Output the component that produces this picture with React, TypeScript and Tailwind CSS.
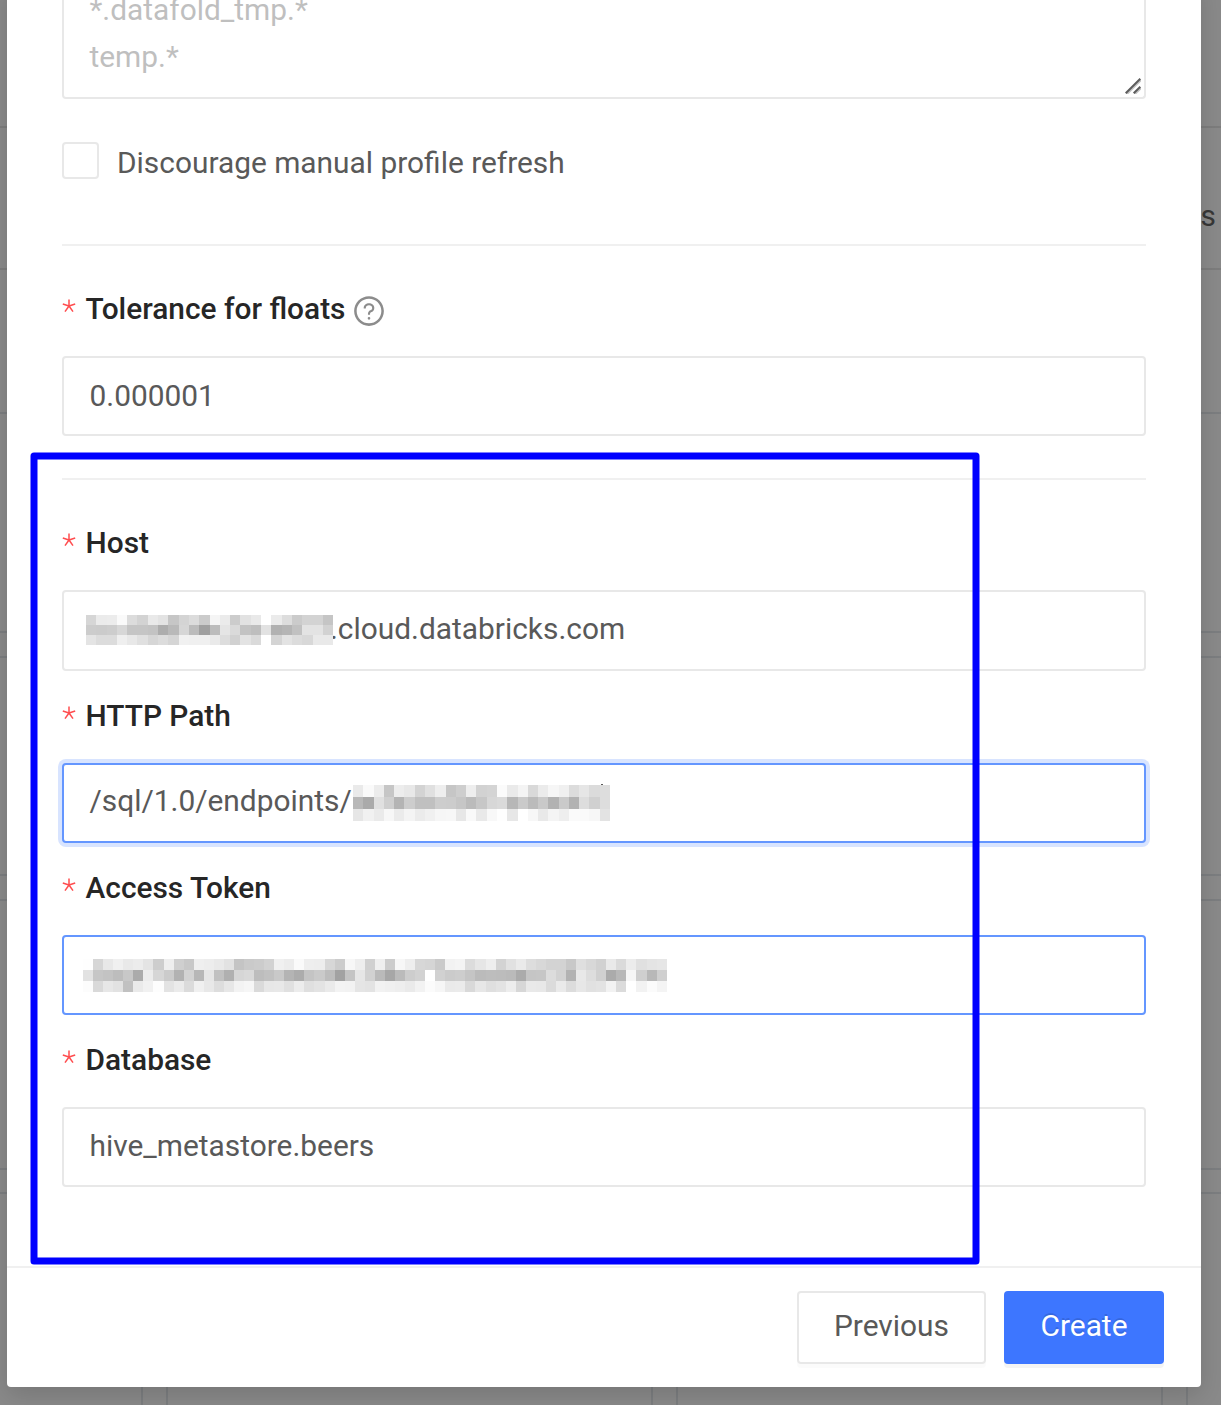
import type { ReactNode } from "react";
import { AiOutlineQuestionCircle } from "react-icons/ai";

const HOST_MASK = [
  "d6ebecfadcd3e9e3c6d4dccbf5ebcce2e9ffebddcbd3d3c5",
  "cccbcdd7c5c5c3adb9d6bca0bce5dac3bee2b1b5c1e3e3d2",
  "e4dcdcefe8e0d6dcd5f1f0f0eaddd1e3daffd4e3dcd8e9e9",
];
const PATH_MASK = [
  "eafaecc6ede8d3e0eec6ceeed2d4fbeaf4d9ebf6f0dce6dbdd",
  "b8aae0cfb4cdc0c0cdccc6bbc7d7dab7cabbc9b2cab2ddd0dd",
  "e6f1eaf7ebf4ebf0f6f7e7f9e9f8fee7fff7e9f4eefafaf7e3",
];
const TOKEN_MASK = [
  "fed6e8f0e9ece4cdeecfc8efede9e2c4caccd2f0ecfaeeedd7ccf7eed0efccf7eed7d5caf2f4dce6eed3e1eaddd8d3d3c8dfd8d1e9daece0e4e6",
  "e2c6c3bdc8abecd6cbb2d3b7e6c1b0d6d9bdc1c9b4acc4cabda2c4e6d1baa7bbcdd2ffd1cbcdc5bbbdbcbaabc5c6dcd2b2e8ddd0abb8f6cfb8cf",
  "fcd9e7e2c1eaf1fde3ebdbf0e8dde7f3f6dae7e8e0ecdfe3eaf3f2e5e3f2f0eeeaf2fbf6eaebd9e7dfe3edd7e9e8dbeadce7e1e3f2dbfff2fbf4",
];

function Mosaic({ rows, className }: { rows: string[]; className: string }) {
  return (
    <span aria-hidden className={`relative z-10 flex shrink-0 flex-col ${className}`}>
      {rows.map((row, r) => (
        <span key={r} className="flex flex-1">
          {(row.match(/../g) ?? []).map((v, i) => (
            <span key={i} className="flex-1" style={{ backgroundColor: `#${v}${v}${v}` }} />
          ))}
        </span>
      ))}
    </span>
  );
}

function Label({ children, help }: { children: ReactNode; help?: boolean }) {
  return (
    <div className="flex h-[47px] items-center pb-0.5">
      <span className="w-[23.5px]">
        <svg viewBox="0 0 14 14" className="-mt-1.5 h-3.5 w-3.5 stroke-[#ff4d4f]" fill="none" strokeWidth="1.5">
          <path d="M7 0.5V7M7 7L0.8 5M7 7L13.2 5M7 7L3 12.6M7 7L11 12.6" />
        </svg>
      </span>
      <span className="font-medium text-[#262626]">{children}</span>
      {help && <AiOutlineQuestionCircle className="mt-1 ml-[7px] text-[34px] text-[#8c8c8c]" />}
    </div>
  );
}

function Field({ className, children }: { className: string; children: ReactNode }) {
  return <div className={`flex items-center rounded border-2 bg-white ${className}`}>{children}</div>;
}

function BackdropRow({ className }: { className: string }) {
  return (
    <div className={`-ml-[344px] flex w-[2020px] gap-[23px] ${className}`}>
      {[0, 1, 2, 3].map((i) => (
        <div key={i} className="w-[487px] shrink-0 border-2 border-[#7c7e80]" />
      ))}
    </div>
  );
}

export default function App() {
  return (
    <div className="relative h-[1405px] w-[1221px] overflow-hidden bg-[#8a8a8a] font-[Roboto,sans-serif] text-[29.87px] leading-[47px] text-[#595959]">
      <div className="flex flex-col">
        <div className="h-32 border-b-2 border-[#7d7d7d]" />
        <div className="flex h-[142px] items-center justify-end border-b-2 border-[#7d7d7d] pr-[5px] pt-[35px] text-[#373737]">s</div>
        <div className="h-[142px]" />
        <BackdropRow className="h-[221px]" />
        <BackdropRow className="mt-[23px] h-[220px]" />
        <BackdropRow className="mt-[23px] h-[271px]" />
        <BackdropRow className="mt-[22px] h-[271px]" />
      </div>

      <div className="absolute top-[-20px] left-[7px] flex h-[1407px] w-[1194px] flex-col rounded-[4px] bg-white shadow-[0_8px_26px_rgba(0,0,0,0.15)]">
        <div className="flex flex-1 flex-col px-[55px]">
          <div className="flex h-[119px] items-end justify-between rounded-b border-2 border-t-0 border-[#e8e8e8]">
            <div className="pb-[17px] pl-[25.5px] text-[#bfbfbf]">
              <div>*.datafold_tmp.*</div>
              <div>temp.*</div>
            </div>
            <svg viewBox="0 0 16 16" className="mr-[3px] mb-[3px] h-4 w-4" fill="none">
              <path d="M2 16L16 2M10 16L16 10" stroke="#c4c4c4" strokeWidth="2" />
              <path d="M0.7 15.3L15.3 0.7M8.7 15.3L15.3 8.7" stroke="#5c5c5c" strokeWidth="2" />
            </svg>
          </div>

          <div className="mt-[43px] flex h-[37px] items-center">
            <span className="h-[37px] w-[37px] rounded border-2 border-[#e8e8e8]" />
            <span className="mt-1 ml-[18px]">Discourage manual profile refresh</span>
          </div>

          <div className="mt-[65px] h-0.5 bg-[#f0f0f0]" />

          <div className="mt-10">
            <Label help>Tolerance for floats</Label>
          </div>
          <Field className="mt-[23px] h-20 border-[#e8e8e8] pb-0.5 pl-[25.5px]">0.000001</Field>

          <div className="mt-[42px] h-0.5 bg-[#f0f0f0]" />

          <div className="mt-10">
            <Label>Host</Label>
          </div>
          <Field className="mt-[23px] h-[81px] border-[#e8e8e8] pl-[22px]">
            <Mosaic rows={HOST_MASK} className="mb-px h-[30px] w-[247px]" />
            <span className="-ml-[3px] pb-[5px]">.cloud.databricks.com</span>
          </Field>

          <div className="mt-[22px]">
            <Label>HTTP Path</Label>
          </div>
          <Field className="mt-[23px] h-20 border-[#6496ff] pl-[25.5px] shadow-[0_0_0_4px_#d8e4ff]">
            <span className="w-[263.5px] pb-1.5">/sql/1.0/endpoints/</span>
            <Mosaic rows={PATH_MASK} className="h-9 w-[257px]" />
            <span className="mb-[37px] -ml-[9px] h-px w-0.5 bg-[#595959]" />
          </Field>

          <div className="mt-[22px]">
            <Label>Access Token</Label>
          </div>
          <Field className="mt-[23px] h-20 border-[#6496ff] pl-[19px]">
            <Mosaic rows={TOKEN_MASK} className="h-[33px] w-[584px]" />
          </Field>

          <div className="mt-[22px]">
            <Label>Database</Label>
          </div>
          <Field className="mt-[23px] h-20 border-[#e8e8e8] pb-1 pl-[25.5px]">hive_metastore.beers</Field>
        </div>

        <div className="flex h-[121px] items-start justify-end gap-[18px] border-t-2 border-[#f0f0f0] pt-[23px] pr-[37px]">
          <button className="h-[73px] w-[189px] rounded border-2 border-[#e8e8e8] pb-1 shadow-[0_4px_0_rgba(0,0,0,0.016)]">
            Previous
          </button>
          <button className="h-[73px] w-40 rounded bg-[#3d76ff] pb-1 text-white shadow-[0_4px_0_rgba(0,0,0,0.045)] [text-shadow:0_-2px_0_rgba(0,0,0,0.12)]">
            Create
          </button>
        </div>
      </div>

      <svg className="pointer-events-none absolute inset-0 h-[1405px] w-[1221px]" fill="none">
        <rect x="34" y="456" width="942" height="805" stroke="#0000ff" strokeWidth="7" strokeLinejoin="round" />
      </svg>
    </div>
  );
}
